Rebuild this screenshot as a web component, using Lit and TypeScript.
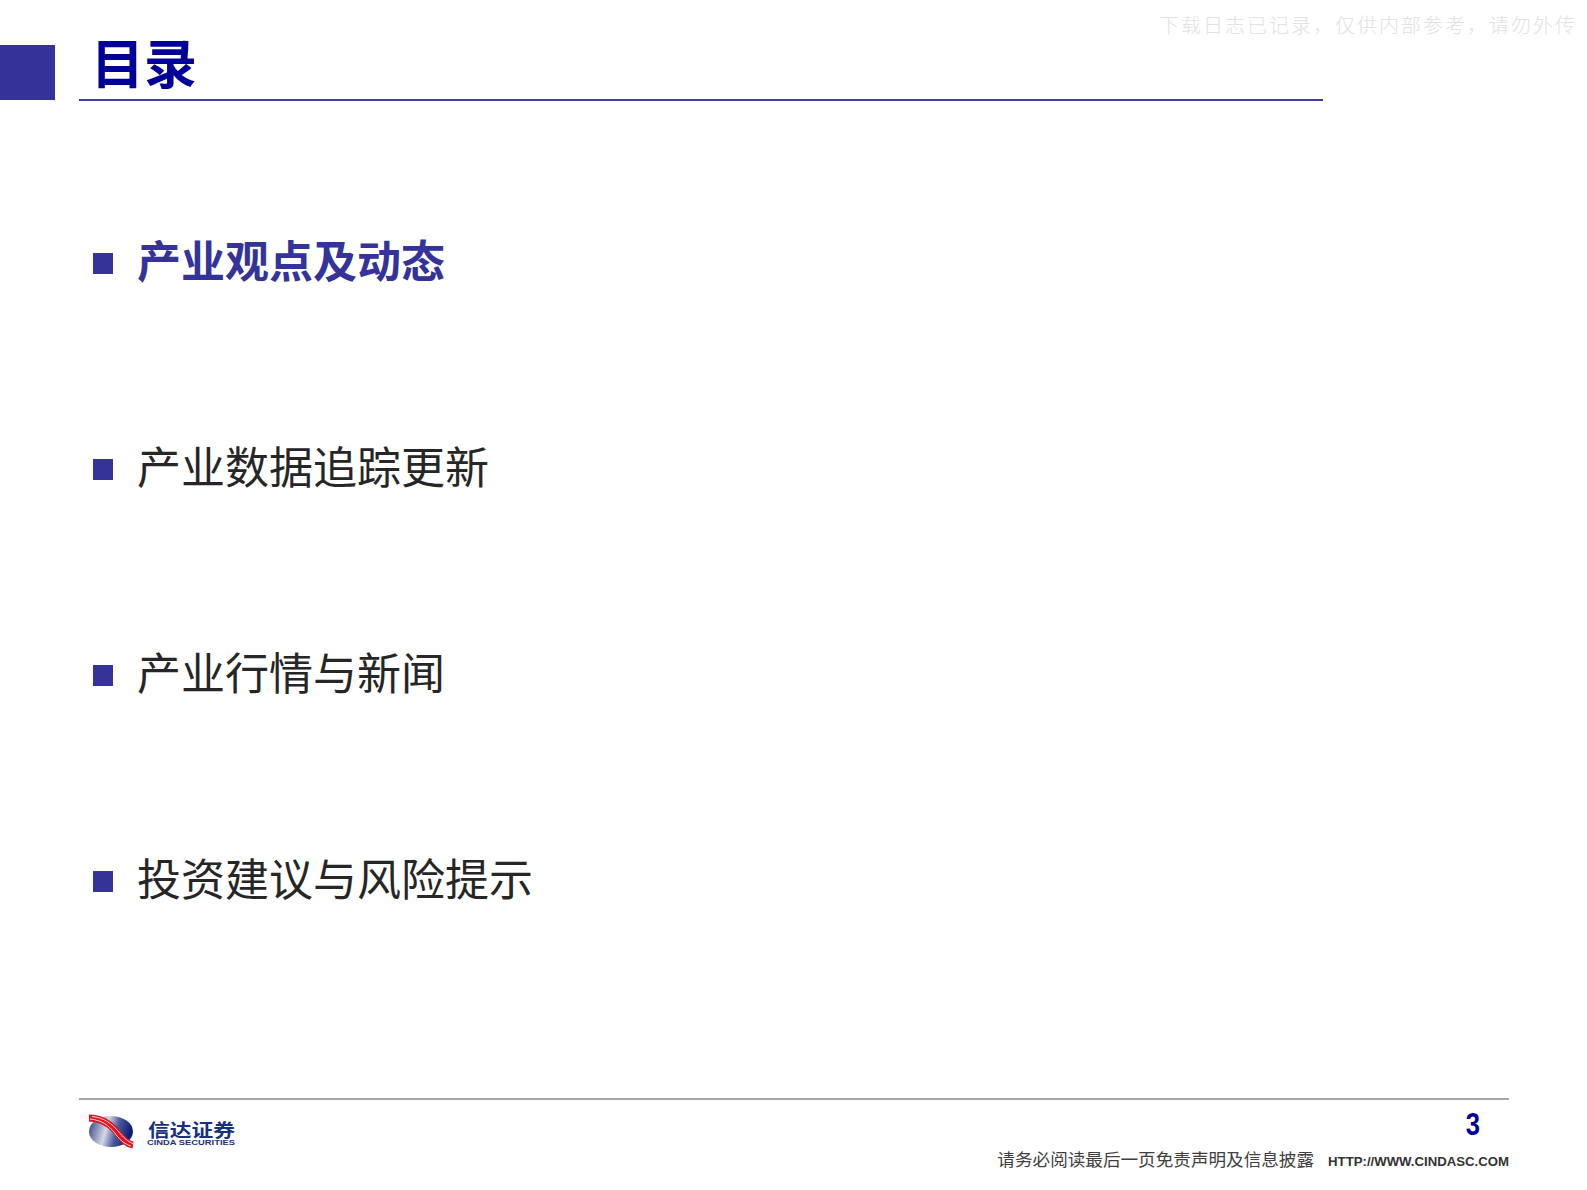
import { LitElement, html, css } from "lit";
import { customElement } from "lit/decorators.js";

const ITEMS = ["产业观点及动态", "产业数据追踪更新", "产业行情与新闻", "投资建议与风险提示"];

@customElement("app-root")
export class AppRoot extends LitElement {
  static styles = css`
    :host { display: block; width: 1587px; height: 1190px; background: #fff; position: relative; overflow: hidden;
      font-family: "Liberation Sans", "Noto Sans CJK SC", sans-serif; }
    .page { display: flex; flex-direction: column; height: 1190px; }
    .watermark { position: absolute; top: 13px; left: 1159px; font-size: 20px; letter-spacing: 2px; line-height: 26px; color: #e2e2e2; white-space: nowrap; font-weight: 300; }
    .head { display: flex; align-items: flex-start; height: 101px; }
    .block { width: 55px; height: 55px; margin-top: 45px; background: #333399; flex: none; }
    .title-wrap { margin-left: 24px; width: 1244px; height: 101px; box-sizing: border-box; border-bottom: 2px solid #3d3da3; padding-left: 12px; }
    .title { margin: 0; padding-top: 36px; font-size: 53px; line-height: 60px; font-weight: 700; color: #000099; }
    .list { list-style: none; margin: 0; padding: 130px 0 0 93px; display: flex; flex-direction: column; gap: 142px; flex: 1; }
    .item { display: flex; align-items: center; height: 64px; font-size: 44px; color: #262626; }
    .item.active { color: #333399; font-weight: 700; }
    .label { margin-bottom: 8px; }
    .bullet { width: 20px; height: 21px; background: #333399; margin-right: 24px; flex: none; }
    .foot { margin: 0 78px 0 79px; border-top: 2px solid #a6a6a6; height: 92px; box-sizing: border-box; display: flex; justify-content: space-between; }
    .logo { display: block; margin: 13px 0 0 7px; }
    .cn { font-size: 18px; font-weight: 700; fill: #17317f; }
    .en { font-size: 8px; font-weight: 700; fill: #17317f; }
    .right { display: flex; flex-direction: column; align-items: flex-end; }
    .num { font-size: 32px; line-height: 34px; font-weight: 700; color: #000099; margin: 7px 27px 0 0; transform: scaleX(0.8); }
    .note { display: flex; align-items: baseline; gap: 14px; margin-top: 6px; white-space: nowrap; color: #404040; }
    .note-cn { font-size: 17.6px; line-height: 26px; }
    .note-url { font-size: 13.2px; font-weight: 700; color: #333; }
  `;

  render() {
    return html`
      <div class="page">
        <div class="watermark">下载日志已记录，仅供内部参考，请勿外传</div>
        <header class="head">
          <div class="block"></div>
          <div class="title-wrap"><h1 class="title">目录</h1></div>
        </header>
        <ul class="list">
          ${ITEMS.map((t, i) => html`<li class="item ${i === 0 ? "active" : ""}"><span class="bullet"></span><span class="label">${t}</span></li>`)}
        </ul>
        <footer class="foot">
          <svg class="logo" width="160" height="40" viewBox="0 0 160 40">
            <defs>
              <linearGradient id="globe" x1="0" y1="0" x2="1" y2="0.2">
                <stop offset="0" stop-color="#26387f" />
                <stop offset="0.45" stop-color="#d5d8e6" />
                <stop offset="0.7" stop-color="#4a5a9c" />
                <stop offset="1" stop-color="#0c1f74" />
              </linearGradient>
            </defs>
            <ellipse cx="25" cy="18.5" rx="22" ry="15.5" fill="url(#globe)" />
            <path d="M3 5 C16 5 24 11 30 18 C36 25 40 31 47 32" fill="none" stroke="#e0141e" stroke-width="7" />
            <path d="M6 3.5 C18 4.5 26 11 32 18 C37 24 42 29 47 30.5" fill="none" stroke="#fff" stroke-width="0.8" />
            <path d="M4 6 C16 7 23 13 28 19 C33 26 38 31 45 33" fill="none" stroke="#fff" stroke-width="0.8" />
            <text class="cn" x="62" y="24" textLength="87" lengthAdjust="spacingAndGlyphs">信达证券</text>
            <text class="en" x="61" y="32" textLength="88" lengthAdjust="spacingAndGlyphs">CINDA SECURITIES</text>
          </svg>
          <div class="right">
            <div class="num">3</div>
            <div class="note"><span class="note-cn">请务必阅读最后一页免责声明及信息披露</span><span class="note-url">HTTP://WWW.CINDASC.COM</span></div>
          </div>
        </footer>
      </div>
    `;
  }
}
